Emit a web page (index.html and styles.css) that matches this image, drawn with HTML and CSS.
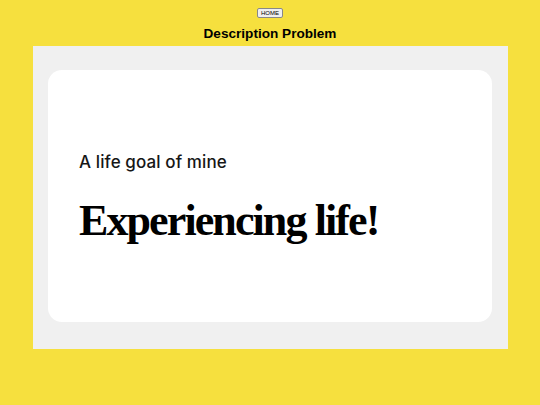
FILE: index.html
```html
<!DOCTYPE html>
<html>
<head>
<meta charset="utf-8">
<link rel="stylesheet" href="styles.css">
</head>
<body>
<div class="top">
  <button class="home">HOME</button>
  <h1 class="title">Description Problem</h1>
</div>
<div class="panel">
  <div class="card">
    <p class="kicker">A life goal of mine</p>
    <h2 class="big">Experiencing life!</h2>
  </div>
</div>
</body>
</html>
```
FILE: styles.css
```css
html, body {
  margin: 0;
  padding: 0;
  background: #f6e03e;
  width: 540px;
  height: 405px;
  overflow: hidden;
}
.top {
  display: flex;
  flex-direction: column;
  align-items: center;
  padding-top: 8px;
}
.home {
  font-family: "Liberation Sans", Arial, sans-serif;
  font-size: 6px;
  padding: 1px 3px;
  height: 10px;
  line-height: 6px;
  border: 1px solid #888;
  border-radius: 2px;
  background: #efefef;
  color: #000;
}
.title {
  margin: 8px 0 0 0;
  font-family: "Liberation Sans", Arial, sans-serif;
  font-size: 13.6px;
  font-weight: bold;
  line-height: 16px;
  color: #000;
}
.panel {
  width: 475px;
  height: 303px;
  margin: 4px auto 0 33px;
  background: #f0f0f0;
  box-sizing: border-box;
  padding: 24px 16px 27px 15px;
}
.card {
  background: #fff;
  border-radius: 14px;
  height: 100%;
  box-sizing: border-box;
  padding: 81px 31px 0 31px;
}
.kicker {
  margin: 0;
  font-family: Inter, "Noto Sans", sans-serif;
  font-size: 17px;
  font-weight: 500;
  line-height: 22px;
  color: #161616;
  letter-spacing: 0.1px;
}
.big {
  margin: 24px 0 0 0;
  font-family: "Liberation Serif", "Times New Roman", serif;
  font-size: 44px;
  font-weight: bold;
  line-height: 48px;
  color: #000;
  letter-spacing: -1.9px;
  white-space: nowrap;
}
```
